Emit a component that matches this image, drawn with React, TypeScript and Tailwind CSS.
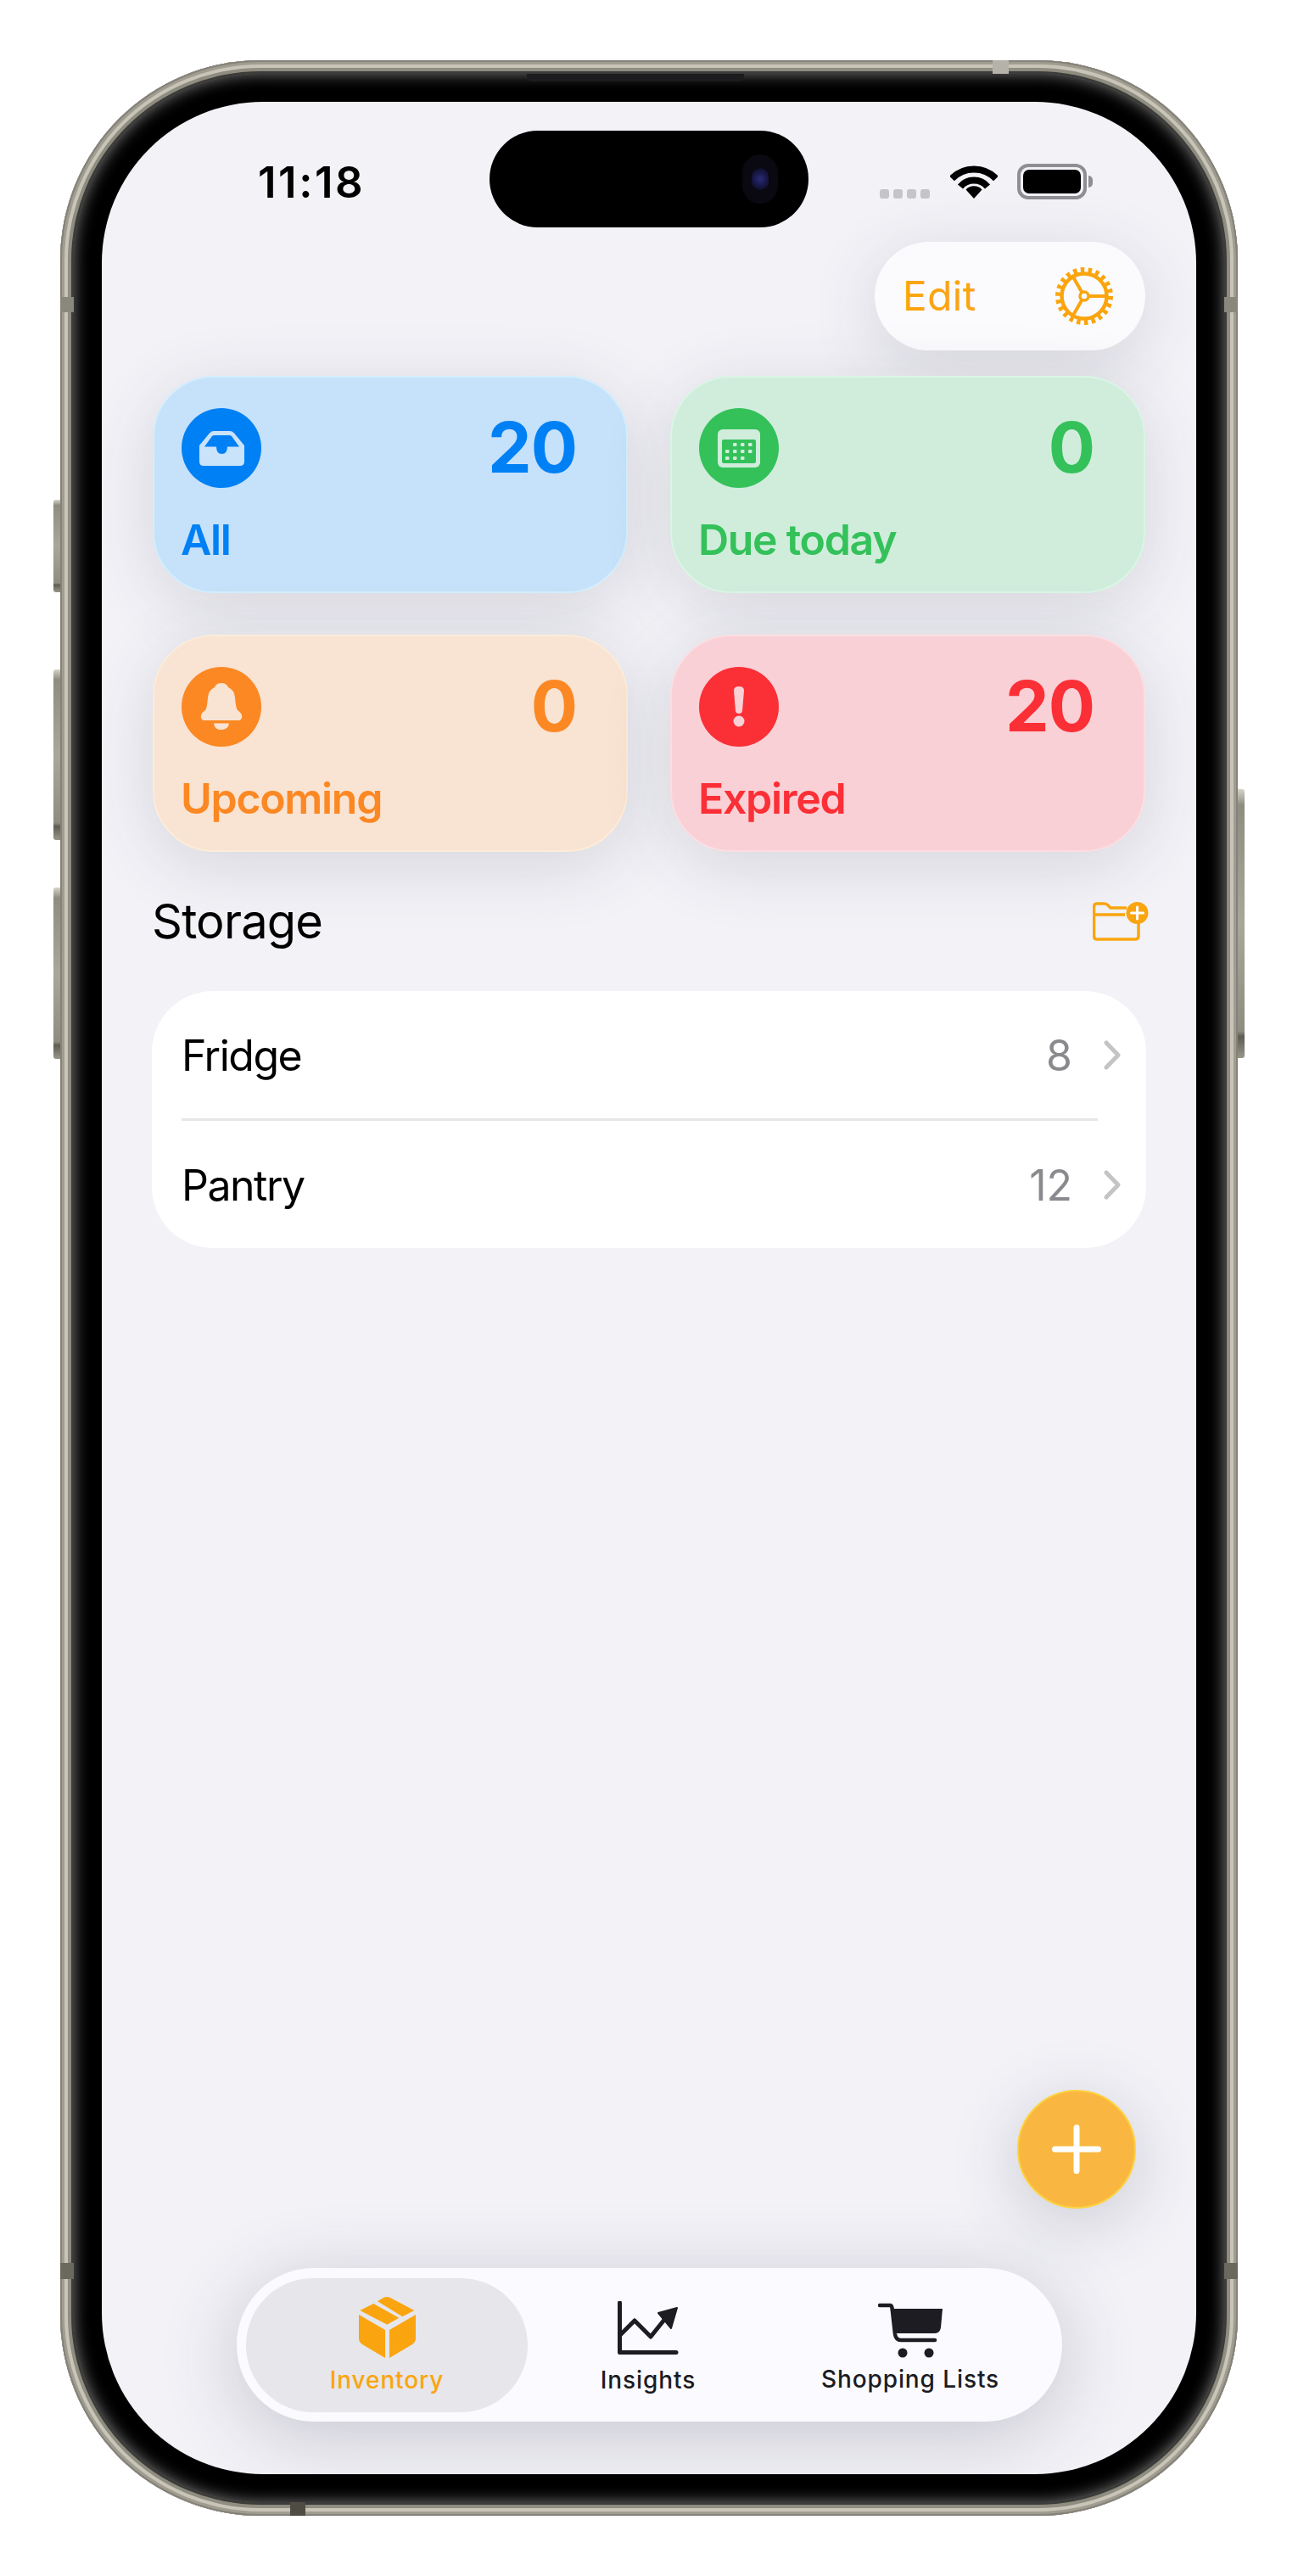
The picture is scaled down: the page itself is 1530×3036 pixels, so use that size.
import React from "react"

function WifiIcon() {
  return (
    <svg width="56" height="41" viewBox="0 0 56 41" fill="none">
      <path d="M2 17.5A36 36 0 0 1 54 17.5" stroke="#000" strokeWidth="8" />
      <path d="M12 27A21 21 0 0 1 44 27" stroke="#000" strokeWidth="8" />
      <path d="M28 41L18.5 30.5A13 13 0 0 1 37.5 30.5Z" fill="#000" />
    </svg>
  )
}

function GearIcon() {
  return (
    <svg width="68" height="68" viewBox="0 0 68 68" fill="none" stroke="#faa50f">
      <circle cx="34" cy="34" r="30.5" strokeWidth="7" strokeDasharray="4.4 4.31" />
      <circle cx="34" cy="34" r="26.5" strokeWidth="4.5" />
      <circle cx="34" cy="34" r="5" strokeWidth="3.5" />
      <path d="M39 34H60M31.5 29.7L21 11.5M31.5 38.3L21 56.5" strokeWidth="4" />
    </svg>
  )
}

function TrayIcon() {
  return (
    <svg width="53" height="41" viewBox="0 0 53 41">
      <path
        d="M0 17L12 2.5Q14 0 17 0H36Q39 0 41 2.5L53 17V36Q53 41 48 41H5Q0 41 0 36Z"
        fill="#c9e3fb"
      />
      <path
        d="M6 18.5L15 6Q16 5 18 5H35Q37 5 38 6L47 18.5H33Q33 27 26.500 27Q20 27 20 18.5Z"
        fill="#0080f5"
      />
    </svg>
  )
}

function CalendarIcon() {
  const dots = [
    [15, 6], [24, 6], [33, 6],
    [6, 14], [15, 14], [24, 14], [33, 14],
    [6, 22], [15, 22], [24, 22],
  ]
  return (
    <svg width="50" height="45" viewBox="0 0 50 45">
      <rect width="50" height="45" rx="6" fill="#d0eddc" />
      <rect x="5" y="12" width="40" height="28" rx="2" fill="#34c15a" />
      <g transform="translate(5 12)">
        {dots.map(([x, y]) => (
          <rect key={`${x}-${y}`} x={x - 2} y={y - 2} width="4.500" height="4" rx="1" fill="#d0eddc" />
        ))}
      </g>
    </svg>
  )
}

function BellIcon() {
  return (
    <svg width="50" height="56" viewBox="0 0 50 56" fill="#f9e3d3">
      <path d="M25 0Q31 0 33 5Q40 8 41 17Q42 30 44 32Q50 36 49 41Q48 44 45 44H5Q2 44 1 41Q0 36 6 32Q8 30 9 17Q10 8 17 5Q19 0 25 0Z" />
      <path d="M16 47.500H34Q33 55 25 55Q17 55 16 47.500Z" />
    </svg>
  )
}

function AlertIcon() {
  return (
    <svg width="14" height="48" viewBox="0 0 14 48" fill="#f9d0d6">
      <path d="M1 5Q1 0 7 0Q13 0 13 5L11 29Q10.500 32 7 32Q3.500 32 3 29Z" />
      <circle cx="7" cy="41" r="6.500" />
    </svg>
  )
}

function BoxIcon() {
  return (
    <svg width="67" height="73" viewBox="0 0 67 73" fill="#faa50f">
      <path d="M0 22L31 40V73L4 57Q0 54 0 50Z" />
      <path d="M36 40L67 22V50Q67 54 63 57L36 73Z" />
      <path d="M1.300 17L17.300 9L47.300 25.700L33.300 33.700Z" />
      <path d="M22 6.300L29 2Q33 0 37 2L65.300 17L51.300 24.300Z" />
    </svg>
  )
}

function ChartIcon() {
  return (
    <svg width="72" height="63" viewBox="0 0 72 63" fill="none" stroke="#1c1c22" strokeLinecap="round" strokeLinejoin="round">
      <path d="M2.500 2V60.500H69" strokeWidth="5" />
      <path d="M3 40L20 23L39 42L55 22" strokeWidth="5" />
      <path d="M70 8L63 32L48 14Z" fill="#1c1c22" strokeWidth="2" />
    </svg>
  )
}

function CartIcon() {
  return (
    <svg width="77" height="66" viewBox="0 0 77 66" fill="#1c1c22">
      <path d="M2 4H14Q16 4 16.500 7L20 38Q21 45 27 45H67" fill="none" stroke="#1c1c22" strokeWidth="4.500" strokeLinecap="round" />
      <path d="M15 8H76L74 30Q73 37 67 37H19Z" />
      <circle cx="29" cy="60" r="5.500" />
      <circle cx="60" cy="60" r="5.500" />
    </svg>
  )
}

function FolderPlusIcon() {
  return (
    <svg width="66" height="46" viewBox="0 0 66 46" fill="none">
      <path d="M54 24V40Q54 44 50 44H5Q1.500 44 1.500 40V6Q1.500 2 5 2H14Q16 2 18 4L21 7H40" stroke="#faa50f" strokeWidth="3.500" />
      <path d="M2 15H38" stroke="#faa50f" strokeWidth="3.500" />
      <circle cx="52.500" cy="13" r="13" fill="#faa50f" />
      <path d="M45.500 13H59.500M52.500 6V20" stroke="#fff" strokeWidth="3" strokeLinecap="round" />
    </svg>
  )
}

function Chevron() {
  return (
    <svg width="20" height="35" viewBox="0 0 20 35" fill="none">
      <path d="M3 3L17 17.500L3 32" stroke="#c4c4c6" strokeWidth="5" strokeLinecap="round" strokeLinejoin="round" />
    </svg>
  )
}

function StatCard({ icon, count, label, bg, edge, text, circle }: {
  icon: React.ReactNode
  count: number
  label: string
  bg: string
  edge: string
  text: string
  circle: string
}) {
  return (
    <div className={`h-[256px] rounded-[72px] border-2 pt-[36px] pl-[32px] pr-[58px] shadow-[0_16px_80px_rgba(60,60,80,0.16)] ${bg} ${edge}`}>
      <div className="flex items-center justify-between">
        <div className={`flex h-[94px] w-[94px] items-center justify-center rounded-full ${circle}`}>{icon}</div>
        <span className={`text-[82px] leading-none font-bold tracking-[-1px] ${text}`}>{count}</span>
      </div>
      <div className={`mt-[31px] -ml-[1px] text-[50px] leading-[60px] font-semibold tracking-[-1.3px] ${text}`}>{label}</div>
    </div>
  )
}

function StorageRow({ name, count }: { name: string; count: number }) {
  return (
    <div className="flex h-[150px] items-center pl-[35px] pr-[30px]">
      <span className="flex-1 pt-[2px] text-[50px] tracking-[-1.5px] text-black">{name}</span>
      <span className="mr-[37px] pt-[2px] text-[50px] text-[#8a8a8e]">{count}</span>
      <Chevron />
    </div>
  )
}

function SideButton({ cls }: { cls: string }) {
  return <div className={`absolute w-[8px] bg-[linear-gradient(to_bottom,#d6d3c8_0,#8f8c80_6%,#a9a69a_50%,#8f8c80_90%,#5f5c52_92%,#99968a_100%)] ${cls}`} />
}

export default function App() {
  return (
    <div className="h-[3036px] w-[1530px] bg-white pt-[71px] pl-[71px] [font-family:Inter,sans-serif]">
      <div className="relative h-[2894px] w-[1388px]">
        <SideButton cls="-left-[8px] top-[518px] h-[109px] rounded-l-[3px]" />
        <SideButton cls="-left-[8px] top-[718px] h-[201px] rounded-l-[3px]" />
        <SideButton cls="-left-[8px] top-[975px] h-[202px] rounded-l-[3px]" />
        <SideButton cls="-right-[8px] top-[859px] h-[317px] rounded-r-[3px]" />

        {/* titanium band */}
        <div className="h-full w-full rounded-[236px] bg-[#8c897c] p-[16px] shadow-[inset_0_0_0_2px_#85827a,inset_0_0_0_5px_#a09d90,inset_0_0_0_9px_#c8c5b8,inset_0_0_0_13px_#8f8c80,inset_0_0_0_16px_#3c3c3a]">
          <div className="relative h-full w-full rounded-[220px] bg-black p-[33px] shadow-[inset_0_0_18px_rgba(130,130,130,0.9)]">
            <div className="absolute top-0 left-[534px] h-[9px] w-[256px] rounded-b-[6px] bg-[#1c1c1e]" />
            <div className="flex h-[2796px] w-[1290px] flex-col overflow-hidden rounded-[190px] bg-[#f2f2f7]">
              {/* status bar */}
              <div className="flex h-[165px] shrink-0 pt-[34px]">
                <div className="mt-[31px] ml-[184px] w-[273px] text-[51px] leading-[60px] font-semibold tracking-[2.5px] text-black">11:18</div>
                <div className="flex h-[114px] w-[376px] items-center justify-end rounded-full bg-black pr-[36px]">
                  <div className="flex h-[58px] w-[42px] items-center justify-center rounded-full bg-[#0a0810]">
                    <div className="h-[26px] w-[20px] rounded-full bg-[radial-gradient(circle,#2a2a7a_0,#14143c_60%,#0a0a18_100%)]" />
                  </div>
                </div>
                <div className="ml-[84px] flex items-end gap-[5px] self-start pt-[69px]">
                  {[0, 1, 2, 3].map((i) => (
                    <div key={i} className="h-[11px] w-[11px] rounded-[3px] bg-[#c4c4c9]" />
                  ))}
                </div>
                <div className="ml-[24px] self-start pt-[39px]">
                  <WifiIcon />
                </div>
                <div className="ml-[23px] flex items-center self-start pt-[39px]">
                  <div className="h-[42px] w-[82px] rounded-[13px] border-[4px] border-[#8e8e93] p-[3px]">
                    <div className="h-full w-full rounded-[7px] bg-black" />
                  </div>
                  <div className="ml-[2px] h-[14px] w-[5px] rounded-r-full bg-[#8e8e93]" />
                </div>
              </div>

              {/* edit pill */}
              <div className="flex shrink-0 justify-end pr-[60px]">
                <div className="flex h-[128px] w-[319px] items-center justify-between rounded-full bg-[#fbfbfe] pr-[38px] pl-[33px] shadow-[0_16px_80px_rgba(60,60,80,0.16)]">
                  <span className="text-[48px] tracking-[0.3px] text-[#faa50f]">Edit</span>
                  <GearIcon />
                </div>
              </div>

              {/* summary cards */}
              <div className="mt-[30px] grid shrink-0 grid-cols-[560px_560px] gap-x-[50px] gap-y-[49px] px-[60px]">
                <StatCard icon={<TrayIcon />} count={20} label="All" bg="bg-[#c6e1fa]" edge="border-[#d3eefc]" text="text-[#0080f5]" circle="bg-[#0080f5]" />
                <StatCard icon={<CalendarIcon />} count={0} label="Due today" bg="bg-[#d0eddc]" edge="border-[#daf5e4]" text="text-[#34c15a]" circle="bg-[#34c15a]" />
                <StatCard icon={<BellIcon />} count={0} label="Upcoming" bg="bg-[#f9e3d3]" edge="border-[#fcecd8]" text="text-[#fb8823]" circle="bg-[#fb8823]" />
                <StatCard icon={<AlertIcon />} count={20} label="Expired" bg="bg-[#f9d0d6]" edge="border-[#fbdee2]" text="text-[#fb2f36]" circle="bg-[#fb2f36]" />
              </div>

              {/* storage */}
              <div className="mt-[48px] flex shrink-0 items-center justify-between pr-[56px] pl-[59px]">
                <span className="text-[56px] leading-[68px] tracking-[-0.8px] text-black">Storage</span>
                <FolderPlusIcon />
              </div>
              <div className="mx-[59px] mt-[48px] shrink-0 rounded-[72px] bg-white">
                <StorageRow name="Fridge" count={8} />
                <div className="mr-[57px] ml-[35px] h-[3px] bg-[#e6e6e8]" />
                <StorageRow name="Pantry" count={12} />
              </div>

              {/* add button */}
              <div className="mt-auto flex justify-end pr-[71px]">
                <div className="flex h-[140px] w-[140px] items-center justify-center rounded-full border-2 border-[#fdd23e] bg-[#f9b741] shadow-[0_16px_80px_rgba(60,60,80,0.22)]">
                  <svg width="58" height="58" viewBox="0 0 58 58" fill="none">
                    <path d="M3.500 29H54.500M29 3.500V54.500" stroke="#fff" strokeWidth="7" strokeLinecap="round" />
                  </svg>
                </div>
              </div>

              {/* tab bar */}
              <div className="mt-[70px] mb-[62px] ml-[159px] flex h-[181px] w-[973px] shrink-0 items-center rounded-full bg-[#fafaff] pl-[11px] shadow-[0_16px_90px_rgba(60,60,80,0.24)]">
                <div className="flex h-[158px] w-[332px] flex-col items-center rounded-full bg-[#e6e6eb] pt-[21px]">
                  <BoxIcon />
                  <span className="mt-[9px] text-[28px] leading-[34px] font-medium tracking-[0.9px] text-[#faa50f]">Inventory</span>
                </div>
                <div className="flex h-[158px] w-[284px] flex-col items-center pt-[27px]">
                  <ChartIcon />
                  <span className="mt-[13px] text-[28px] leading-[34px] font-medium tracking-[0.9px] text-[#1c1c22]">Insights</span>
                </div>
                <div className="flex h-[158px] w-[334px] flex-col items-center pt-[28px]">
                  <CartIcon />
                  <span className="mt-[8px] text-[28px] leading-[34px] font-medium tracking-[0.9px] text-[#1c1c22]">Shopping Lists</span>
                </div>
              </div>
            </div>
          </div>
        </div>

        {/* antenna bands */}
        <div className="absolute top-0 left-[1099px] h-[16px] w-[19px] bg-[#b5b2aa]" />
        <div className="absolute top-[279px] left-0 h-[18px] w-[16px] bg-[#8a877c]" />
        <div className="absolute top-[279px] right-0 h-[18px] w-[16px] bg-[#8a877c]" />
        <div className="absolute top-[2596px] left-0 h-[19px] w-[16px] bg-[#6b685e]" />
        <div className="absolute top-[2596px] right-0 h-[19px] w-[16px] bg-[#6b685e]" />
        <div className="absolute bottom-0 left-[271px] h-[16px] w-[18px] bg-[#4f4c44]" />
      </div>
    </div>
  )
}
